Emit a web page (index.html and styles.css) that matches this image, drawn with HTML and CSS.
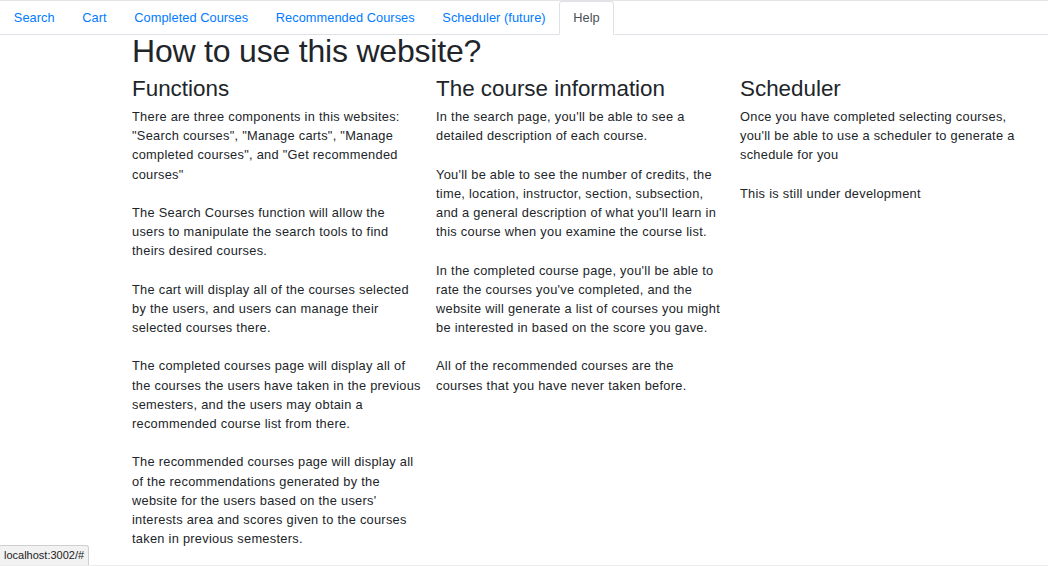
FILE: index.html
```html
<!DOCTYPE html>
<html>
<head>
<meta charset="utf-8">
<link rel="stylesheet" href="styles.css">
</head>
<body>
<div class="page">
  <ul class="tabs">
    <li class="tab"><a class="tab-link" href="#">Search</a></li>
    <li class="tab"><a class="tab-link" href="#">Cart</a></li>
    <li class="tab"><a class="tab-link" href="#">Completed Courses</a></li>
    <li class="tab"><a class="tab-link" href="#">Recommended Courses</a></li>
    <li class="tab"><a class="tab-link" href="#">Scheduler (future)</a></li>
    <li class="tab"><a class="tab-link active" href="#">Help</a></li>
  </ul>
  <div class="container">
    <h1 class="title">How to use this website?</h1>
    <div class="row">
      <div class="col">
        <h3 class="col-title">Functions</h3>
        <p class="text">There are three components in this websites:<br>"Search courses", "Manage carts", "Manage<br>completed courses", and "Get recommended<br>courses"<br><br>The Search Courses function will allow the<br>users to manipulate the search tools to find<br>theirs desired courses.<br><br>The cart will display all of the courses selected<br>by the users, and users can manage their<br>selected courses there.<br><br>The completed courses page will display all of<br>the courses the users have taken in the previous<br>semesters, and the users may obtain a<br>recommended course list from there.<br><br>The recommended courses page will display all<br>of the recommendations generated by the<br>website for the users based on the users'<br>interests area and scores given to the courses<br>taken in previous semesters.</p>
      </div>
      <div class="col">
        <h3 class="col-title">The course information</h3>
        <p class="text">In the search page, you'll be able to see a<br>detailed description of each course.<br><br>You'll be able to see the number of credits, the<br>time, location, instructor, section, subsection,<br>and a general description of what you'll learn in<br>this course when you examine the course list.<br><br>In the completed course page, you'll be able to<br>rate the courses you've completed, and the<br>website will generate a list of courses you might<br>be interested in based on the score you gave.<br><br>All of the recommended courses are the<br>courses that you have never taken before.</p>
      </div>
      <div class="col">
        <h3 class="col-title">Scheduler</h3>
        <p class="text">Once you have completed selecting courses,<br>you'll be able to use a scheduler to generate a<br>schedule for you<br><br>This is still under development</p>
      </div>
    </div>
  </div>
  <div class="status">localhost:3002/#</div>
</div>
</body>
</html>
```
FILE: styles.css
```css
html, body {
  margin: 0;
  padding: 0;
  background: #fff;
}
body {
  font-family: "Liberation Sans", Arial, sans-serif;
  color: #212529;
  font-size: 12.8px;
  line-height: 1.5;
}
.page {
  position: relative;
  height: 564px;
  border-top: 1px solid #e4e4e4;
  border-bottom: 2px solid #ececec;
  overflow: hidden;
}
.tabs {
  display: flex;
  list-style: none;
  margin: 0;
  padding: 0;
  border-bottom: 1px solid #dee2e6;
}
.tab {
  margin-bottom: -1px;
}
.tab-link {
  display: block;
  padding: 6.4px 12.8px;
  border: 1px solid transparent;
  border-top-left-radius: 3.2px;
  border-top-right-radius: 3.2px;
  color: #007bff;
  text-decoration: none;
  letter-spacing: 0.05px;
}
.tab-link.active {
  color: #495057;
  background: #fff;
  border-color: #dee2e6 #dee2e6 #fff;
}
.container {
  margin-left: 120px;
  width: 912px;
}
.title {
  margin: 0 12px 8.8px;
  font-size: 32px;
  font-weight: 500;
  line-height: 32px;
  letter-spacing: -0.2px;
}
.row {
  display: flex;
}
.col {
  width: 280px;
  padding: 0 12px;
}
.col-title {
  margin: 0 0 4.4px;
  font-size: 22.4px;
  font-weight: 500;
  line-height: 1.2;
}
.text {
  margin: 0;
  letter-spacing: 0.28px;
  white-space: nowrap;
}
.status {
  position: absolute;
  left: 0;
  bottom: 0;
  padding: 2px 4px 3px 4px;
  font-size: 11px;
  line-height: 14px;
  background: #f2f2f2;
  border: 1px solid #cfcfcf;
  border-left: none;
  border-bottom: none;
  border-top-right-radius: 3px;
  color: #222;
}
```
